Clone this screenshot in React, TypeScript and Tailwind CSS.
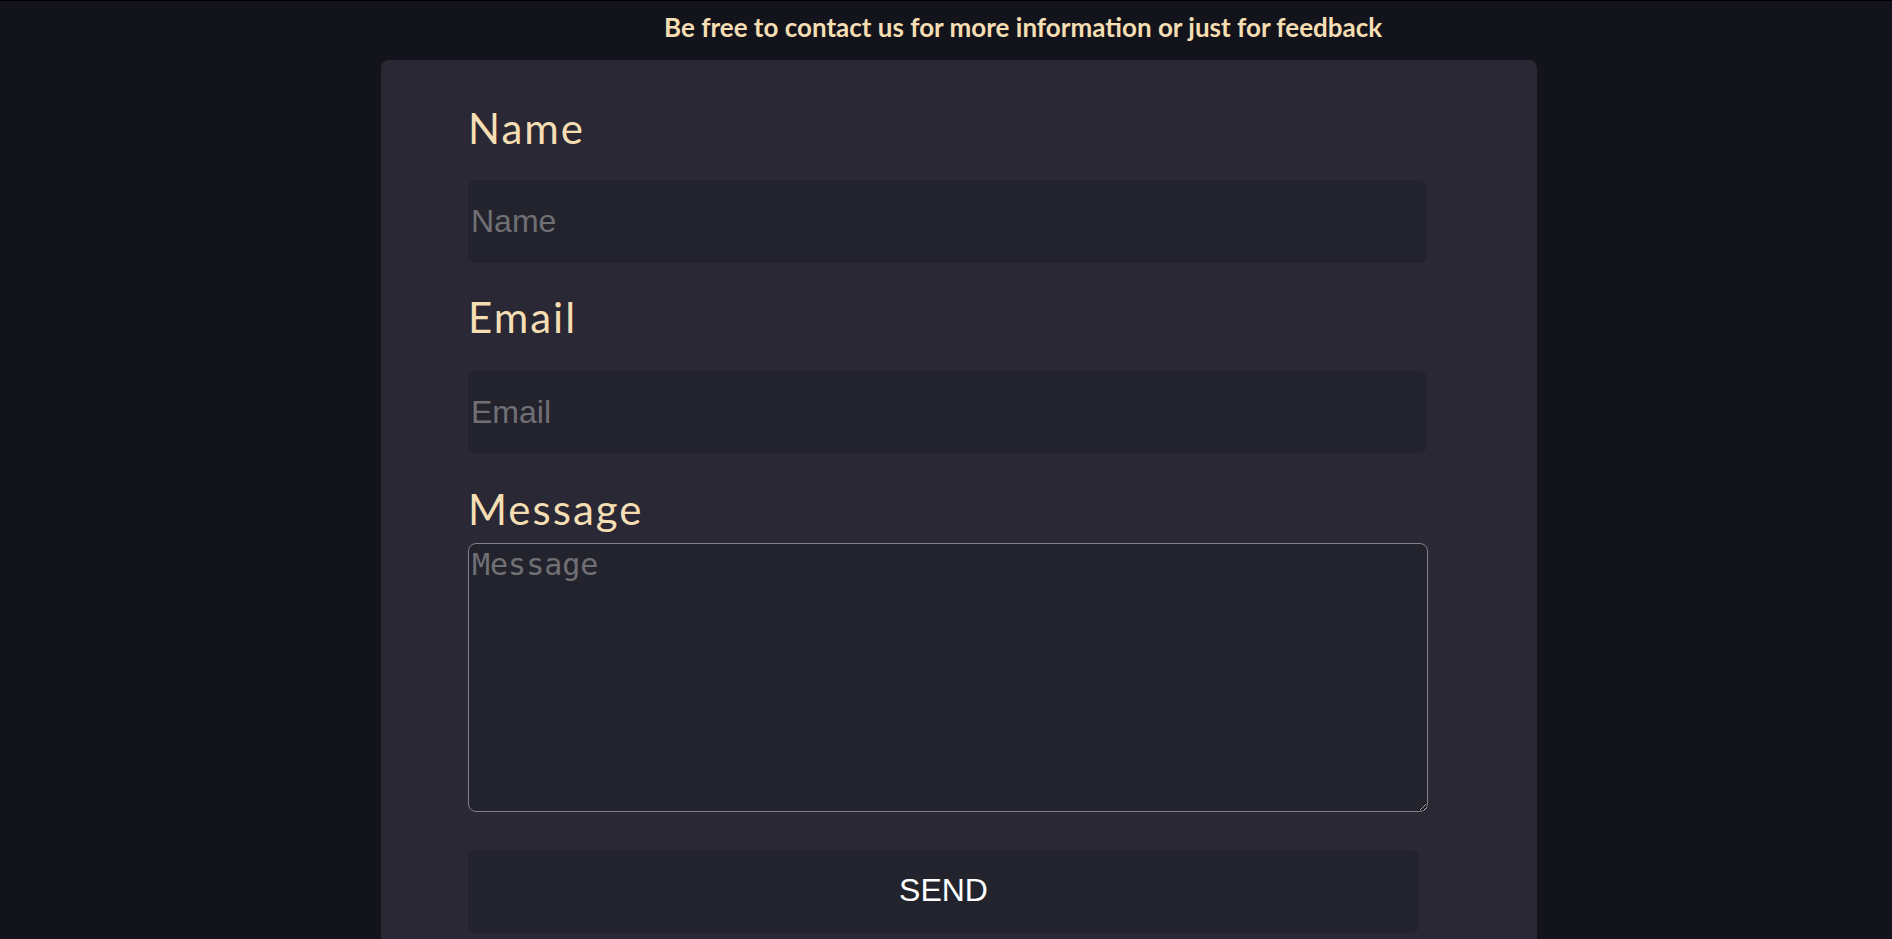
import React from "react";

export default function App() {
  const label =
    "block text-[42px] leading-[50px] tracking-[2px] text-[#f5deb3] font-['Lato','Noto_Sans',sans-serif]";
  const field =
    "w-[959px] bg-[#23232e] rounded-[8px] pl-[3px] text-[32px] text-white placeholder:text-[#707074] outline-none font-['Liberation_Sans',Arial,sans-serif]";
  return (
    <div className="h-[939px] overflow-hidden bg-[#13131b] border-t border-black flex flex-col">
      <div className="h-[59px] pl-[664px] pt-[11px]">
        <h1 className="text-[26px] leading-[30px] font-bold text-[#f5deb3] whitespace-nowrap font-['Lato','Noto_Sans',sans-serif]">
          Be free to contact us for more information or just for feedback
        </h1>
      </div>
      <div className="ml-[381px] w-[1156px] flex-1 bg-[#292834] rounded-t-[8px] pl-[87px] pt-[43px]">
        <form onSubmit={(e) => e.preventDefault()} className="flex flex-col">
          <label className={label}>Name</label>
          <input placeholder="Name" className={field + " mt-[27px] h-[83px]"} />
          <label className={label + " mt-[29px]"}>Email</label>
          <input placeholder="Email" className={field + " mt-[29px] h-[82px]"} />
          <label className={label + " mt-[31px]"}>Message</label>
          <textarea
            placeholder="Message"
            className="mt-[9px] w-[960px] h-[269px] bg-[#23232e] rounded-[8px] border border-[#808085] px-[3px] pt-[3px] text-[30px] leading-[36px] text-white placeholder:text-[#707074] outline-none font-['DejaVu_Sans_Mono',monospace]"
          />
          <button
            type="submit"
            className="mt-[38px] w-[951px] h-[83px] pb-[3px] bg-[#23232e] rounded-[8px] text-[32px] text-white font-['Liberation_Sans',Arial,sans-serif]"
          >
            SEND
          </button>
        </form>
      </div>
    </div>
  );
}
